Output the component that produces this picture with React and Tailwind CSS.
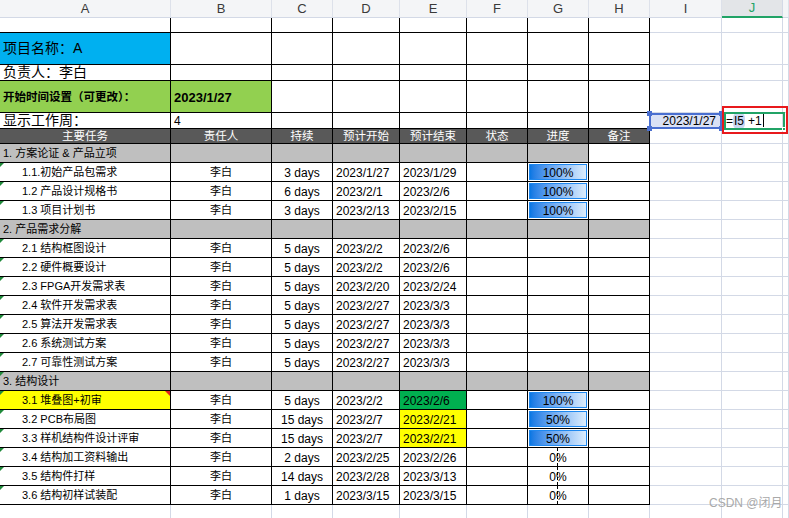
import React from "react";

const W = [
  "w-[171px]",
  "w-[101px]",
  "w-[61px]",
  "w-[67px]",
  "w-[67px]",
  "w-[61px]",
  "w-[61px]",
  "w-[61px]",
  "w-[72px]",
  "w-[61px]",
  "w-[6px]",
];
const TB = "border-r border-b border-black shrink-0";
const GL = "border-r border-b border-[#d3d9e6] shrink-0";

const tasks = [
  { g: "1. 方案论证 & 产品立项", hWhite: true },
  { n: "1.1.初始产品包需求", d: "3 days", s: "2023/1/27", e: "2023/1/29", p: 100 },
  { n: "1.2 产品设计规格书", d: "6 days", s: "2023/2/1", e: "2023/2/6", p: 100 },
  { n: "1.3 项目计划书", d: "3 days", s: "2023/2/13", e: "2023/2/15", p: 100 },
  { g: "2. 产品需求分解" },
  { n: "2.1 结构框图设计", d: "5 days", s: "2023/2/2", e: "2023/2/6" },
  { n: "2.2 硬件概要设计", d: "5 days", s: "2023/2/2", e: "2023/2/6" },
  { n: "2.3 FPGA开发需求表", d: "5 days", s: "2023/2/20", e: "2023/2/24" },
  { n: "2.4 软件开发需求表", d: "5 days", s: "2023/2/27", e: "2023/3/3" },
  { n: "2.5 算法开发需求表", d: "5 days", s: "2023/2/27", e: "2023/3/3" },
  { n: "2.6 系统测试方案", d: "5 days", s: "2023/2/27", e: "2023/3/3" },
  { n: "2.7 可靠性测试方案", d: "5 days", s: "2023/2/27", e: "2023/3/3" },
  { g: "3. 结构设计", tri: true },
  { n: "3.1 堆叠图+初审", d: "5 days", s: "2023/2/2", e: "2023/2/6", p: 100, hl: true, eg: true },
  { n: "3.2 PCB布局图", d: "15 days", s: "2023/2/7", e: "2023/2/21", p: 50, ey: true },
  { n: "3.3 样机结构件设计评审", d: "15 days", s: "2023/2/7", e: "2023/2/21", p: 50, ey: true },
  { n: "3.4 结构加工资料输出", d: "2 days", s: "2023/2/25", e: "2023/2/26", p: 0 },
  { n: "3.5 结构件打样", d: "14 days", s: "2023/2/28", e: "2023/3/13", p: 0 },
  { n: "3.6 结构初样试装配", d: "1 days", s: "2023/3/15", e: "2023/3/15", p: 0 },
];

function GreenTri() {
  return (
    <div className="absolute left-0 top-0 h-0 w-0 border-t-[4px] border-r-[4px] border-t-[#1f8a3a] border-r-transparent" />
  );
}
function RedTri() {
  return (
    <div className="absolute right-0 top-0 h-0 w-0 border-t-[5px] border-l-[5px] border-t-[#e02020] border-l-transparent" />
  );
}

function Bar({ v }) {
  if (v === 0) {
    return (
      <div className="relative flex h-full w-full items-center justify-center">
        <span className="relative pt-[1px]">0%</span>
        <div className="absolute left-[29px] top-0 h-full border-l border-dashed border-black" />
      </div>
    );
  }
  return (
    <div className="mx-[1px] mt-[1px] mb-[1px] flex flex-1 items-center justify-center self-stretch border border-[#1e88f0] bg-linear-to-r from-[#0677e3] to-[#dcedfd] pt-[1px]">
      {v}%
    </div>
  );
}

function Outside({ h }) {
  return (
    <>
      <div className={`${W[8]} ${GL} ${h}`} />
      <div className={`${W[9]} ${GL} ${h}`} />
      <div className={`${W[10]} ${GL} ${h}`} />
    </>
  );
}

function GroupRow({ t }) {
  const g = "bg-[#bfbfbf]";
  return (
    <div className="flex h-[19px]">
      <div className={`${W[0]} ${TB} ${g} relative flex items-center pl-[3px] pt-[1px]`}>
        {t.tri && <GreenTri />}
        {t.g}
      </div>
      <div className={`${W[1]} ${TB} ${g}`} />
      <div className={`${W[2]} ${TB} ${g}`} />
      <div className={`${W[3]} ${TB} ${g}`} />
      <div className={`${W[4]} ${TB} ${g}`} />
      <div className={`${W[5]} ${TB} ${g}`} />
      <div className={`${W[6]} ${TB} ${g}`} />
      <div className={`${W[7]} ${TB} ${t.hWhite ? "bg-white" : g}`} />
      <Outside h="" />
    </div>
  );
}

function TaskRow({ t }) {
  return (
    <div className="flex h-[19px]">
      <div
        className={`${W[0]} ${TB} relative flex items-center pl-[22px] pt-[1px] ${
          t.hl ? "bg-[#ffff00]" : ""
        }`}
      >
        <GreenTri />
        {t.hl && <RedTri />}
        {t.n}
      </div>
      <div className={`${W[1]} ${TB} flex items-center justify-center pt-[1px]`}>李白</div>
      <div className={`${W[2]} ${TB} flex items-center justify-center pt-[1px] text-[12px]`}>{t.d}</div>
      <div className={`${W[3]} ${TB} flex items-center pl-[3px] pt-[1px] text-[12px]`}>{t.s}</div>
      <div
        className={`${W[4]} ${TB} flex items-center pl-[3px] pt-[1px] text-[12px] ${
          t.eg ? "bg-[#00b050]" : t.ey ? "bg-[#ffff00]" : ""
        }`}
      >
        {t.e}
      </div>
      <div className={`${W[5]} ${TB}`} />
      <div className={`${W[6]} ${TB} flex text-[12px]`}>
        {t.p !== undefined && <Bar v={t.p} />}
      </div>
      <div className={`${W[7]} ${TB}`} />
      <Outside h="" />
    </div>
  );
}

export default function App() {
  const letters = ["A", "B", "C", "D", "E", "F", "G", "H", "I", "J", ""];
  return (
    <div
      className="relative h-[518px] w-[789px] overflow-hidden bg-white text-[11px] text-black"
      style={{ fontFamily: '"Liberation Sans", "Noto Sans CJK SC", sans-serif' }}
    >
      {/* column header */}
      <div className="flex h-[18px] bg-[#f4f5f7]">
        {letters.map((l, i) => (
          <div
            key={i}
            className={`${W[i]} shrink-0 flex items-center justify-center text-[13px] ${
              i === 9
                ? "bg-[#e3e5e8] text-[#21a366] border-b-2 border-b-[#21a366] border-r border-r-[#d3d9e6]"
                : "text-[#3a3a3a] border-b border-b-[#d3d9e6] border-r border-r-[#dde1ea]"
            }`}
          >
            {l}
          </div>
        ))}
      </div>

      {/* row 1 */}
      <div className="flex h-[15px]">
        {[0, 1, 2, 3, 4, 5, 6, 7].map((i) => (
          <div key={i} className={`${W[i]} ${TB}`} />
        ))}
        <Outside h="" />
      </div>

      {/* row 2 */}
      <div className="flex h-[32px]">
        <div className={`${W[0]} ${TB} flex items-end bg-[#00b0f0] pb-[5px] pl-[3px] text-[14px]`}>
          项目名称：A
        </div>
        {[1, 2, 3, 4, 5, 6, 7].map((i) => (
          <div key={i} className={`${W[i]} ${TB}`} />
        ))}
        <Outside h="" />
      </div>

      {/* row 3 */}
      <div className="flex h-[16px]">
        <div className={`${W[0]} ${TB} flex items-end pl-[3px] text-[14px] leading-[15px]`}>
          负责人：李白
        </div>
        {[1, 2, 3, 4, 5, 6, 7].map((i) => (
          <div key={i} className={`${W[i]} ${TB}`} />
        ))}
        <Outside h="" />
      </div>

      {/* row 4 */}
      <div className="flex h-[32px]">
        <div className={`${W[0]} ${TB} flex items-center bg-[#92d050] pl-[3px] pt-[3px] text-[11.5px] font-bold`}>
          开始时间设置（可更改）：
        </div>
        <div className={`${W[1]} ${TB} flex items-center bg-[#92d050] pl-[3px] pt-[3px] text-[13px] font-bold`}>
          2023/1/27
        </div>
        {[2, 3, 4, 5, 6, 7].map((i) => (
          <div key={i} className={`${W[i]} ${TB}`} />
        ))}
        <Outside h="" />
      </div>

      {/* row 5 */}
      <div className="flex h-[16px]">
        <div className={`${W[0]} ${TB} flex items-end pl-[3px] text-[14px] leading-[15px]`}>
          显示工作周：
        </div>
        <div className={`${W[1]} ${TB} flex items-end pl-[3px] text-[12px] leading-[14px]`}>4</div>
        {[2, 3, 4, 5, 6, 7].map((i) => (
          <div key={i} className={`${W[i]} ${TB}`} />
        ))}
        <div className={`${W[8]} ${GL} flex items-center justify-end bg-[#dae1f5] pr-[5px] text-[12px]`}>
          2023/1/27
        </div>
        <div className={`${W[9]} ${GL} flex items-center pl-[4px] text-[12px]`}>
          <span>=</span>
          <span className="rounded-[6px] bg-[#c9d6f2] px-[1px]">I5</span>
          <span className="ml-[3px]">+1</span>
          <span className="ml-[1px] h-[13px] border-l border-black" />
        </div>
        <div className={`${W[10]} ${GL}`} />
      </div>

      {/* header row 6 */}
      <div className="flex h-[15px] bg-[#595959] text-[11.5px] text-white">
        {["主要任务", "责任人", "持续", "预计开始", "预计结束", "状态", "进度", "备注"].map((h, i) => (
          <div key={i} className={`${W[i]} ${TB} flex items-center justify-center leading-[14px]`}>
            {h}
          </div>
        ))}
        <div className={`${W[8]} ${GL} bg-white`} />
        <div className={`${W[9]} ${GL} bg-white`} />
        <div className={`${W[10]} ${GL} bg-white`} />
      </div>

      {tasks.map((t, i) => (t.g ? <GroupRow key={i} t={t} /> : <TaskRow key={i} t={t} />))}

      {/* trailing empty row */}
      <div className="flex h-[19px]">
        {[0, 1, 2, 3, 4, 5, 6, 7, 8, 9, 10].map((i) => (
          <div key={i} className={`${W[i]} ${GL}`} />
        ))}
      </div>

      {/* I5 selection overlay */}
      <div className="pointer-events-none absolute left-[649px] top-[113px] h-[16px] w-[73px] border-2 border-[#4a6fd0]" />
      <div className="absolute left-[647px] top-[111px] h-[5px] w-[5px] bg-[#4a6fd0]" />
      <div className="absolute left-[719px] top-[111px] h-[5px] w-[5px] bg-[#4a6fd0]" />
      <div className="absolute left-[647px] top-[126px] h-[5px] w-[5px] bg-[#4a6fd0]" />
      <div className="absolute left-[719px] top-[126px] h-[5px] w-[5px] bg-[#4a6fd0]" />

      {/* J5 active cell */}
      <div className="pointer-events-none absolute left-[724px] top-[112px] h-[18px] w-[61px] border-2 border-[#21a366]" />
      <div className="absolute left-[782px] top-[127px] h-[4px] w-[4px] border border-white bg-[#21a366]" />

      {/* red annotation */}
      <div className="pointer-events-none absolute left-[722px] top-[106px] h-[28px] w-[66px] border-2 border-[#e8191c]" />

      {/* watermark */}
      <div className="absolute left-[709px] top-[494px] text-[12px] text-[#a9a9a9]">CSDN @闭月</div>
    </div>
  );
}
